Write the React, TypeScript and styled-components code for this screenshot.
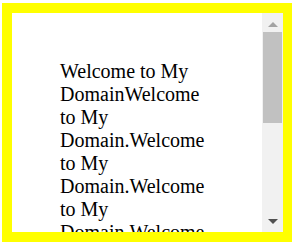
import React from 'react';
import styled, { createGlobalStyle } from 'styled-components';

const GlobalStyle = createGlobalStyle`
  html, body {
    margin: 0;
    padding: 0;
    background: #ffffff;
  }
  body {
    padding: 3px 0 0 2px;
  }
`;

// Box with a thick yellow frame: text pane + scrollbar side by side
const Frame = styled.div`
  display: flex;
  width: 271px;
  height: 219px;
  border: 10px solid #ffff00;
  background: #ffffff;
`;

const Pane = styled.div`
  flex: 1;
  overflow: hidden;
`;

const Message = styled.p`
  margin: 0;
  padding: 47px 48px 20px 48px;
  font-family: 'Liberation Serif', 'Times New Roman', serif;
  font-size: 20px;
  color: #000000;
`;

// Classic scrollbar drawn by hand (headless browsers hide the real one)
const Scrollbar = styled.div`
  width: 21px;
  display: flex;
  flex-direction: column;
  background: #f1f1f1;
`;

const ArrowButton = styled.div<{ $dir: 'up' | 'down' }>`
  height: 19px;
  box-sizing: border-box;
  display: flex;
  align-items: center;
  justify-content: center;
  padding-top: ${(p) => (p.$dir === 'up' ? '3px' : '0')};
  padding-bottom: ${(p) => (p.$dir === 'down' ? '3px' : '0')};
`;

const Track = styled.div`
  flex: 1;
  padding: 0 1px;
`;

const Thumb = styled.div<{ $size: number }>`
  height: ${(p) => p.$size}px;
  background: #c1c1c1;
`;

const Arrow: React.FC<{ dir: 'up' | 'down' }> = ({ dir }) => (
  <ArrowButton $dir={dir}>
    <svg width="10" height="5" viewBox="0 0 10 5">
      {dir === 'up' ? (
        <polygon points="0,5 5,0 10,5" fill="#a3a3a3" />
      ) : (
        <polygon points="0,0 10,0 5,5" fill="#505050" />
      )}
    </svg>
  </ArrowButton>
);

const App: React.FC = () => {
  const text =
    'Welcome to My DomainWelcome' +
    ' to My Domain.Welcome'.repeat(6) +
    ' to My Domain.';

  return (
    <>
      <GlobalStyle />
      <Frame>
        <Pane>
          <Message>{text}</Message>
        </Pane>
        <Scrollbar>
          <Arrow dir="up" />
          <Track>
            <Thumb $size={91} />
          </Track>
          <Arrow dir="down" />
        </Scrollbar>
      </Frame>
    </>
  );
};

export default App;
